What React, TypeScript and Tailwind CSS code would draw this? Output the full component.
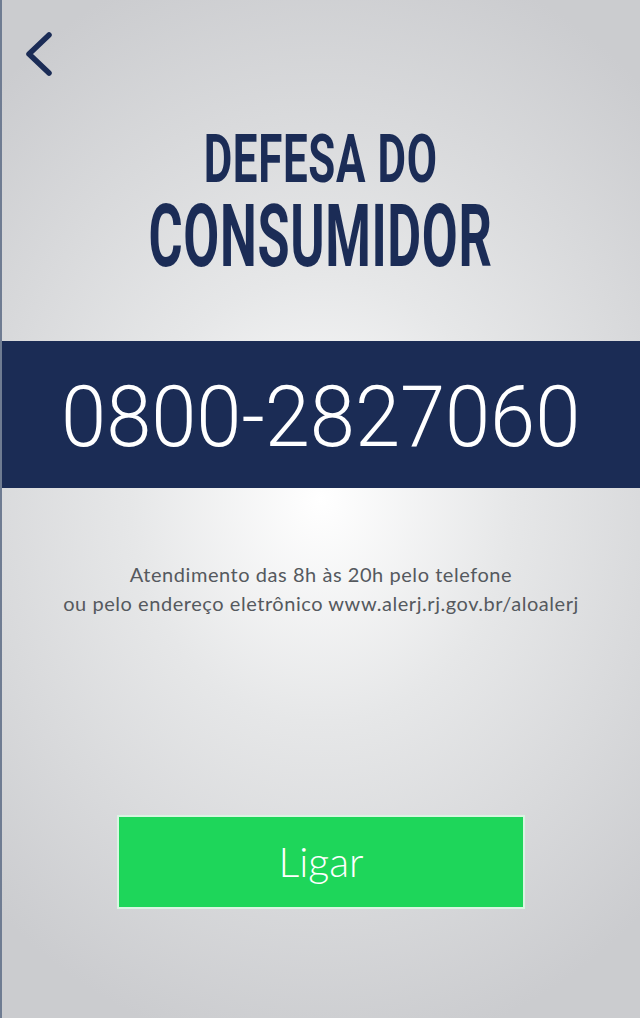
import React from "react";

const App: React.FC = () => (
  <div className="relative flex h-[1018px] w-full flex-col overflow-hidden border-l-2 border-[#6f7c92] bg-[radial-gradient(ellipse_75%_55%_at_50%_49%,#ffffff_0%,#e6e7e8_40%,#cbcccf_100%)] font-['Roboto',sans-serif]">
    <button className="h-[80px] w-[64px] shrink-0" aria-label="Voltar">
      <svg width="64" height="80" viewBox="0 0 64 80" fill="none">
        <path
          d="M47 35 L27 54 L47 73"
          stroke="#1b2c56"
          strokeWidth="5.5"
          strokeLinecap="round"
          strokeLinejoin="round"
        />
      </svg>
    </button>

    <div className="mt-[46px] flex flex-col items-center text-[#1b2c56]">
      <span className="inline-block h-[67px] origin-center scale-x-[0.655] text-[67px] font-bold leading-none tracking-[1px]">
        DEFESA DO
      </span>
      <span className="inline-block origin-center scale-x-[0.6] text-[87px] font-bold leading-none tracking-[1px]">
        CONSUMIDOR
      </span>
    </div>

    <div className="mt-[61px] flex h-[147px] shrink-0 justify-center bg-[#1b2c55] pt-[33px]">
      <span className="inline-block h-[86px] origin-center scale-x-[0.945] text-[86px] font-light leading-none text-white">
        0800-2827060
      </span>
    </div>

    <p className="mt-[72px] text-center font-['Lato',sans-serif] text-[20px] leading-[29px] tracking-[0.55px] text-[#55595e]">
      Atendimento das 8h às 20h pelo telefone
      <br />
      ou pelo endereço eletrônico www.alerj.rj.gov.br/aloalerj
    </p>

    <div className="mt-[197px] flex justify-center">
      <button className="flex h-[94px] w-[408px] items-center justify-center border-2 border-[#d9f5e2] bg-[#1ed65a] font-['Lato',sans-serif] text-[41px] font-light text-white">
        Ligar
      </button>
    </div>
  </div>
);

export default App;
